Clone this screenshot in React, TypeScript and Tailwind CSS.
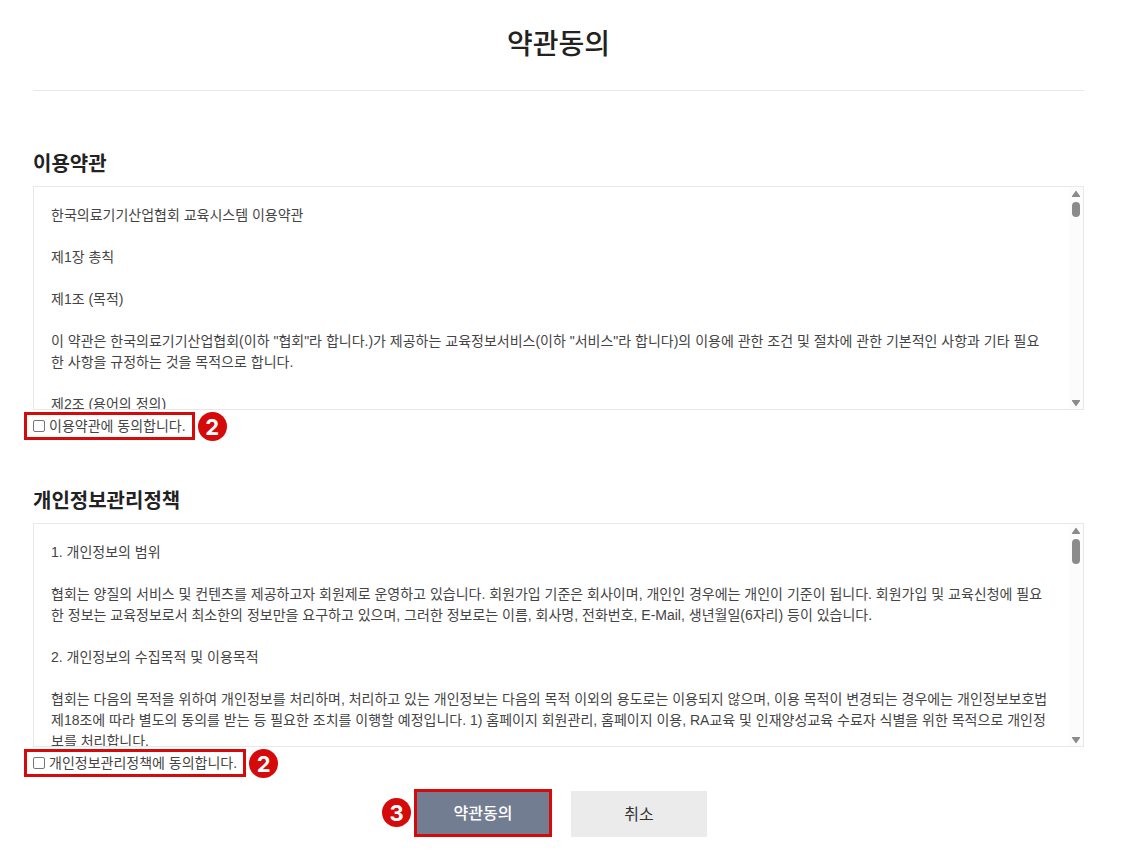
import React from 'react';

const TERMS = `한국의료기기산업협회 교육시스템 이용약관

제1장 총칙

제1조 (목적)

이 약관은 한국의료기기산업협회(이하 "협회"라 합니다.)가 제공하는 교육정보서비스(이하 "서비스"라 합니다)의 이용에 관한 조건 및 절차에 관한 기본적인 사항과 기타 필요한 사항을 규정하는 것을 목적으로 합니다.

제2조 (용어의 정의)`;

const PRIVACY = `1. 개인정보의 범위

협회는 양질의 서비스 및 컨텐츠를 제공하고자 회원제로 운영하고 있습니다. 회원가입 기준은 회사이며, 개인인 경우에는 개인이 기준이 됩니다. 회원가입 및 교육신청에 필요한 정보는 교육정보로서 최소한의 정보만을 요구하고 있으며, 그러한 정보로는 이름, 회사명, 전화번호, E-Mail, 생년월일(6자리) 등이 있습니다.

2. 개인정보의 수집목적 및 이용목적

협회는 다음의 목적을 위하여 개인정보를 처리하며, 처리하고 있는 개인정보는 다음의 목적 이외의 용도로는 이용되지 않으며, 이용 목적이 변경되는 경우에는 개인정보보호법 제18조에 따라 별도의 동의를 받는 등 필요한 조치를 이행할 예정입니다. 1) 홈페이지 회원관리, 홈페이지 이용, RA교육 및 인재양성교육 수료자 식별을 위한 목적으로 개인정보를 처리합니다.`;

const StepBadge: React.FC<{ step: number }> = ({ step }) => (
  <span className="flex h-[29px] w-[29px] shrink-0 items-center justify-center rounded-full bg-[#d50a0a] font-['Inter',sans-serif] text-[22px] leading-7 font-bold text-white">
    {step}
  </span>
);

const Arrow: React.FC<{ down?: boolean }> = ({ down }) => (
  <svg viewBox="0 0 10 8" className={down ? 'h-2 w-[10px] rotate-180' : 'h-2 w-[10px]'} aria-hidden="true">
    <path d="M5 1.6 8.4 6.4H1.6Z" fill="#8b8b8b" stroke="#8b8b8b" strokeWidth="1.4" strokeLinejoin="round" />
  </svg>
);

type AgreementProps = {
  id: string;
  title: string;
  text: string;
  label: string;
  thumb: string;
};

const Agreement: React.FC<AgreementProps> = ({ id, title, text, label, thumb }) => (
  <section>
    <h2 id={`${id}-title`} className="mb-2 text-[20px] leading-[30px] font-bold text-[#222]">{title}</h2>
    <div className="flex h-56 border border-[#e8e8e8]">
      <textarea
        readOnly
        aria-labelledby={`${id}-title`}
        className="min-w-0 flex-1 resize-none overflow-hidden px-[17px] pt-[18px] font-['Liberation_Sans','Noto_Sans_CJK_KR',sans-serif] text-[14px] leading-[21px] break-normal text-[#444] outline-none"
        value={text}
      />
      {/* Scrollbar */}
      <div className="flex w-[14px] flex-col items-center bg-[#fcfcfc] pt-[3px] pb-0.5">
        <Arrow />
        <div className={`mt-1 w-2 rounded-full bg-[#8b8b8b] ${thumb}`}></div>
        <div className="flex-1"></div>
        <Arrow down />
      </div>
    </div>
    {/* Agree check */}
    <div className="mt-0.5 -ml-[9px] flex items-start gap-[3px]">
      <div className="flex h-7 items-center gap-1 border-[3px] border-[#d50a0a] px-[6px]">
        <input
          id={id}
          type="checkbox"
          className="h-3 w-3 shrink-0 appearance-none rounded-[2px] border border-[#767676] bg-white checked:bg-[#737d92]"
        />
        <label htmlFor={id} className="font-['Liberation_Sans','Noto_Sans_CJK_KR',sans-serif] text-[14px] leading-[21px] text-[#444]">{label}</label>
      </div>
      <StepBadge step={2} />
    </div>
  </section>
);

export default function App() {
  return (
    <main className="min-h-screen bg-white pr-[37px] pb-5 pl-[33px] font-['Noto_Sans_CJK_KR',sans-serif]">
      <header className="border-b border-[#e8e8e8] pt-[21px] pb-[27px] text-center">
        <h1 className="text-[28px] leading-[42px] font-medium text-[#222]">약관동의</h1>
      </header>

      <form className="pt-[57px]" onSubmit={(e) => e.preventDefault()}>
        <div className="flex flex-col gap-11">
          <Agreement id="terms" title="이용약관" text={TERMS} label="이용약관에 동의합니다." thumb="h-[15px]" />
          <Agreement id="privacy" title="개인정보관리정책" text={PRIVACY} label="개인정보관리정책에 동의합니다." thumb="h-[25px]" />
        </div>

        {/* Buttons */}
        <div className="mt-[11px] flex items-end justify-center gap-[19px] pl-1">
          <div className="relative">
            <div className="absolute top-[9px] right-full mr-[3px]">
              <StepBadge step={3} />
            </div>
            <button type="submit" className="block h-12 w-[138px] border-[3px] border-[#d50a0a] bg-[#737d92] pb-0.5 text-[16px] leading-6 font-medium text-white">
              약관동의
            </button>
          </div>
          <button type="button" className="h-[46px] w-[136px] bg-[#ebebeb] pb-0.5 text-[16px] leading-6 text-[#333]">
            취소
          </button>
        </div>
      </form>
    </main>
  );
}
